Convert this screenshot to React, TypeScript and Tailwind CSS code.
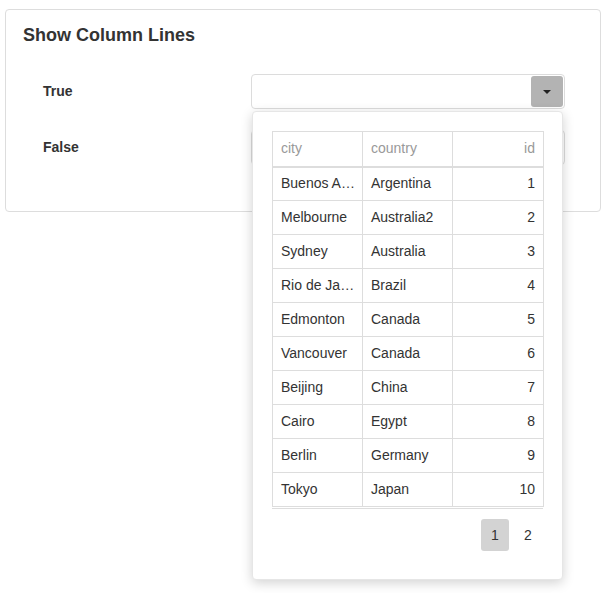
import React from "react";

const rows: [string, string, number][] = [
  ["Buenos Aires", "Argentina", 1],
  ["Melbourne", "Australia2", 2],
  ["Sydney", "Australia", 3],
  ["Rio de Janeiro", "Brazil", 4],
  ["Edmonton", "Canada", 5],
  ["Vancouver", "Canada", 6],
  ["Beijing", "China", 7],
  ["Cairo", "Egypt", 8],
  ["Berlin", "Germany", 9],
  ["Tokyo", "Japan", 10],
];

function Dropdown() {
  return (
    <div className="flex h-[35px] w-[314px] items-center justify-end rounded-[4px] border border-[#dcdcdc] bg-white pr-px">
      <div className="flex h-[31px] w-[32px] items-center justify-center rounded-[3px] bg-[#b3b3b3]">
        <div className="h-0 w-0 border-x-[4px] border-t-[4px] border-x-transparent border-t-[#222]" />
      </div>
    </div>
  );
}

export default function App() {
  return (
    <div
      className="relative min-h-[593px] bg-white pl-[5px] pr-[12px] pt-[9px] text-[#333]"
      style={{ fontFamily: '"Liberation Sans", Arial, sans-serif' }}
    >
      <div className="h-[203px] rounded-[4px] border border-[#dddddd] bg-white">
        <div className="pl-[17px] pt-[14px] text-[18px] font-bold leading-[22px] text-[#333]">
          Show Column Lines
        </div>
        <div className="mt-[28px] flex flex-col gap-[21px]">
          <div className="flex items-center">
            <div className="w-[245px] pl-[37px] text-[14px] font-bold">True</div>
            <Dropdown />
          </div>
          <div className="flex items-center">
            <div className="w-[245px] pl-[37px] text-[14px] font-bold">False</div>
            <Dropdown />
          </div>
        </div>
      </div>

      <div className="absolute left-[252px] top-[111px] h-[469px] w-[311px] rounded-[4px] border border-[#e6e6e6] bg-white px-[19px] pt-[19px] shadow-[0_3px_12px_rgba(0,0,0,0.18)]">
        <div className="w-[271px] border-b border-[#dddddd] pb-[1px]">
          <table className="w-[271px] table-fixed border-collapse text-[14px]">
            <colgroup>
              <col className="w-[90px]" />
              <col className="w-[90px]" />
              <col className="w-[91px]" />
            </colgroup>
            <thead>
              <tr className="h-[35px]">
                <th className="border border-b-2 border-[#dddddd] pl-[8px] pr-[5px] text-left font-normal text-[#999]">city</th>
                <th className="border border-b-2 border-[#dddddd] pl-[8px] pr-[5px] text-left font-normal text-[#999]">country</th>
                <th className="border border-b-2 border-[#dddddd] pl-[8px] pr-[8px] text-right font-normal text-[#999]">id</th>
              </tr>
            </thead>
            <tbody>
              {rows.map(([city, country, id]) => (
                <tr key={id} className="h-[34px]">
                  <td className="truncate border border-[#dddddd] pl-[8px] pr-[5px]">{city}</td>
                  <td className="truncate border border-[#dddddd] pl-[8px] pr-[5px]">{country}</td>
                  <td className="border border-[#dddddd] pl-[8px] pr-[8px] text-right">{id}</td>
                </tr>
              ))}
            </tbody>
          </table>
        </div>
        <div className="mt-[10px] flex justify-end gap-[5px] pr-[1px] text-[14px]">
          <div className="flex h-[32px] w-[28px] items-center justify-center rounded-[3px] bg-[#d3d3d3]">1</div>
          <div className="flex h-[32px] w-[28px] items-center justify-center">2</div>
        </div>
      </div>
    </div>
  );
}
